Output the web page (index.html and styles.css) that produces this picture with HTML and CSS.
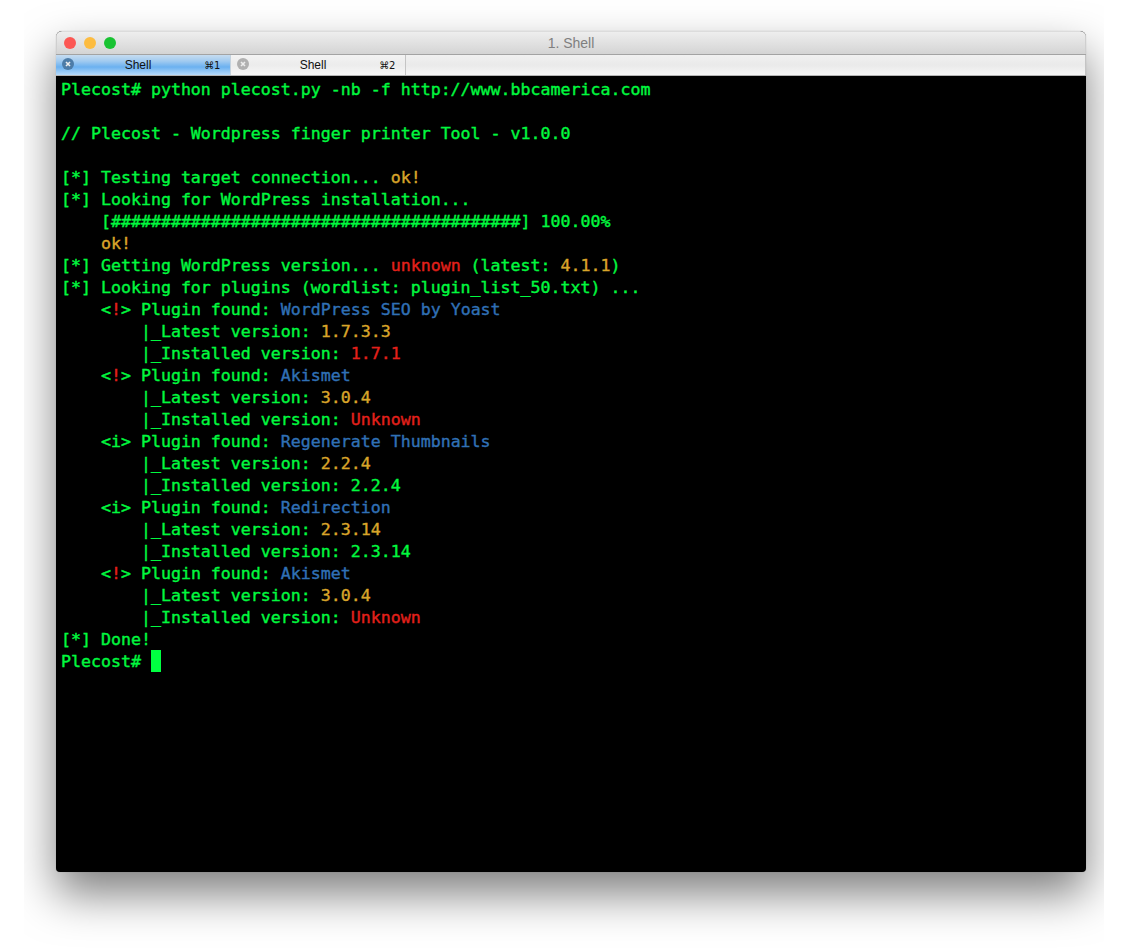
FILE: index.html
```html
<!DOCTYPE html>
<html lang="en">
<head>
<meta charset="utf-8">
<title>1. Shell</title>
<link rel="stylesheet" href="styles.css">
</head>
<body>
<div class="stage">
  <div class="window">
    <header class="titlebar">
      <div class="lights">
        <span class="light red"></span>
        <span class="light yellow"></span>
        <span class="light green"></span>
      </div>
      <div class="title">1. Shell</div>
    </header>
    <nav class="tabs">
      <div class="tab active">
        <span class="close"><svg viewBox="0 0 12 12" width="12" height="12"><circle cx="6" cy="6" r="6" class="close-bg"/><path d="M4 4l4 4M8 4l-4 4" class="close-x"/></svg></span>
        <span class="tab-name">Shell</span>
        <span class="tab-key">⌘1</span>
      </div>
      <div class="tab">
        <span class="close"><svg viewBox="0 0 12 12" width="12" height="12"><circle cx="6" cy="6" r="6" class="close-bg"/><path d="M4 4l4 4M8 4l-4 4" class="close-x"/></svg></span>
        <span class="tab-name">Shell</span>
        <span class="tab-key">⌘2</span>
      </div>
    </nav>
    <pre class="term">Plecost# python plecost.py -nb -f http://www.bbcamerica.com

// Plecost - Wordpress finger printer Tool - v1.0.0

[*] Testing target connection... <span class="y">ok!</span>
[*] Looking for WordPress installation...
    [#########################################] 100.00%
    <span class="y">ok!</span>
[*] Getting WordPress version... <span class="r">unknown</span> (latest: <span class="y">4.1.1</span>)
[*] Looking for plugins (wordlist: plugin_list_50.txt) ...
    &lt;<span class="r">!</span>&gt; Plugin found: <span class="b">WordPress SEO by Yoast</span>
        |_Latest version: <span class="y">1.7.3.3</span>
        |_Installed version: <span class="r">1.7.1</span>
    &lt;<span class="r">!</span>&gt; Plugin found: <span class="b">Akismet</span>
        |_Latest version: <span class="y">3.0.4</span>
        |_Installed version: <span class="r">Unknown</span>
    &lt;i&gt; Plugin found: <span class="b">Regenerate Thumbnails</span>
        |_Latest version: <span class="y">2.2.4</span>
        |_Installed version: 2.2.4
    &lt;i&gt; Plugin found: <span class="b">Redirection</span>
        |_Latest version: <span class="y">2.3.14</span>
        |_Installed version: 2.3.14
    &lt;<span class="r">!</span>&gt; Plugin found: <span class="b">Akismet</span>
        |_Latest version: <span class="y">3.0.4</span>
        |_Installed version: <span class="r">Unknown</span>
[*] Done!
Plecost# <span class="cursor"> </span></pre>
  </div>
</div>
</body>
</html>
```
FILE: styles.css
```css
html, body {
  margin: 0;
  padding: 0;
  background: #fff;
}
.stage {
  width: 1080px;
  height: 952px;
  margin-left: 24px;
  padding: 31px 0 0 32px;
  box-sizing: border-box;
  overflow: hidden;
}
.window {
  width: 1030px;
  height: 841px;
  border-radius: 6px 6px 4px 4px;
  background: #000;
  box-shadow: 0 22px 45px rgba(0, 0, 0, 0.5), 0 0 1px rgba(0, 0, 0, 0.3);
  overflow: hidden;
  display: flex;
  flex-direction: column;
}
.titlebar {
  flex: none;
  height: 24px;
  box-sizing: border-box;
  display: flex;
  align-items: center;
  position: relative;
  background: linear-gradient(#eeeeee, #d4d4d4);
  border-top: 1px solid #dcdcdc;
  border-bottom: 1px solid #a3a3a3;
  box-shadow: inset 1px 0 #cfcfcf, inset -1px 0 #cfcfcf;
}
.lights {
  display: flex;
  gap: 8px;
  padding-left: 8px;
}
.light {
  width: 12px;
  height: 12px;
  border-radius: 50%;
}
.light.red { background: #fc5753; }
.light.yellow { background: #fdbc40; }
.light.green { background: #19c332; }
.title {
  position: absolute;
  left: 0;
  right: 0;
  text-align: center;
  font: 14px/20px "Liberation Sans", Arial, sans-serif;
  color: #7f7f7f;
}
.tabs {
  flex: none;
  height: 21px;
  box-sizing: border-box;
  display: flex;
  background: linear-gradient(#f1f1f1, #eaeaea 50%, #f6f6f6);
  border-bottom: 1px solid #b5b5b5;
  box-shadow: inset -1px 0 #c4c4c4;
}
.tab {
  width: 174px;
  position: relative;
  border-right: 1px solid #c4c4c4;
  background: linear-gradient(#f3f3f3, #ececec 50%, #f7f7f7);
  font: 12px/14px "Liberation Sans", Arial, sans-serif;
  color: #111;
}
.tab.active {
  border-right-color: #c4d2de;
  background: linear-gradient(#c6dcf0, #a2cbf0 30%, #6bb1f0 60%, #b5dafb);
}
.close {
  position: absolute;
  left: 6px;
  top: 3px;
  width: 12px;
  height: 12px;
  line-height: 0;
}
.close-bg { fill: #b0b0b0; }
.close-x { stroke: #ededed; stroke-width: 1.6; fill: none; }
.tab.active .close-bg { fill: #4d7ca8; }
.tab-name {
  position: absolute;
  left: 0;
  width: 164px;
  top: 3px;
  text-align: center;
}
.tab-key {
  position: absolute;
  right: 10px;
  top: 4px;
  font: 10px/14px "DejaVu Sans", sans-serif;
  letter-spacing: -0.3px;
}
.term {
  flex: 1;
  margin: 0;
  padding: 3px 0 0 5px;
  font-family: "DejaVu Sans Mono", "Liberation Mono", monospace;
  font-size: 16.6px;
  line-height: 22px;
  color: #00f93f;
  -webkit-text-stroke: 0.4px currentColor;
}
.y { color: #d9a52a; }
.r { color: #e3201b; }
.b { color: #3070b5; }
.cursor {
  display: inline-block;
  width: 10px;
  height: 22px;
  margin-top: -1px;
  vertical-align: top;
  background: #00ff41;
}
```
